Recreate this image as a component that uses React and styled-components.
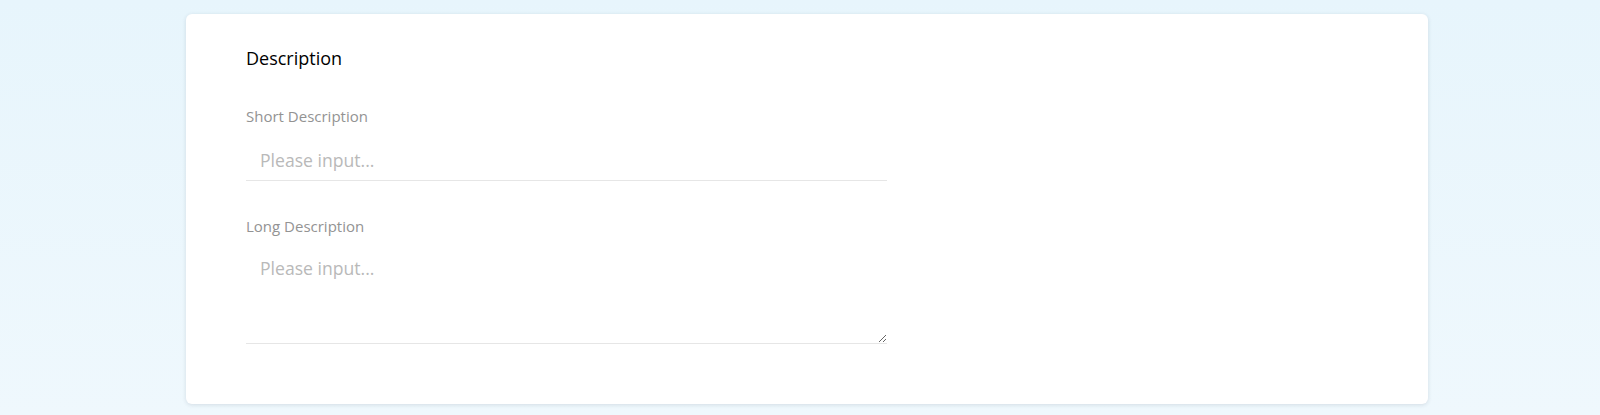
import React from 'react'
import styled, { createGlobalStyle } from 'styled-components'

const GlobalStyle = createGlobalStyle`
  html, body {
    margin: 0;
    padding: 0;
  }

  body {
    font-family: 'Open Sans', 'Liberation Sans', sans-serif;
    background: linear-gradient(180deg, #e7f5fc 0%, #eff8fd 100%);
    min-height: 415px;
  }
`

const Page = styled.main`
  min-height: 415px;
  box-sizing: border-box;
  padding: 14px 0 11px 186px;
`

const Card = styled.section`
  width: 1242px;
  box-sizing: border-box;
  padding: 32px 60px 60px;
  background: #fff;
  border-radius: 6px;
  box-shadow: 0 1px 4px rgba(40, 60, 80, 0.14);
`

const Title = styled.h2`
  margin: 0 0 36px;
  font-size: 18px;
  line-height: 24px;
  font-weight: 400;
  color: #000;
`

const Field = styled.div`
  display: flex;
  flex-direction: column;
  width: 641px;

  & + & {
    margin-top: 35px;
  }
`

const Label = styled.label`
  font-size: 15px;
  line-height: 20px;
  color: #939393;
  margin-bottom: ${props => (props.$tight ? '13px' : '10px')};
`

const fieldText = `
  width: 100%;
  box-sizing: border-box;
  border: none;
  border-bottom: 1px solid #e6e6e6;
  outline: none;
  background: transparent;
  font-family: 'Open Sans', 'Liberation Sans', sans-serif;
  font-size: 17.6px;
  color: #333;
  padding: 0 14px;

  &::placeholder {
    color: #b9b9b9;
  }
`

const Input = styled.input`
  ${fieldText}
  height: 42px;
`

const TextArea = styled.textarea`
  ${fieldText}
  display: block;
  height: 98px;
  padding-top: 10px;
  line-height: 24px;
  resize: vertical;
`

const App = () => {
  return (
    <>
      <GlobalStyle />
      <Page>
        <Card>
          <Title>Description</Title>
          <Field>
            <Label $tight>Short Description</Label>
            <Input placeholder="Please input..." />
          </Field>
          <Field>
            <Label>Long Description</Label>
            <TextArea placeholder="Please input..." />
          </Field>
        </Card>
      </Page>
    </>
  )
}

export default App
